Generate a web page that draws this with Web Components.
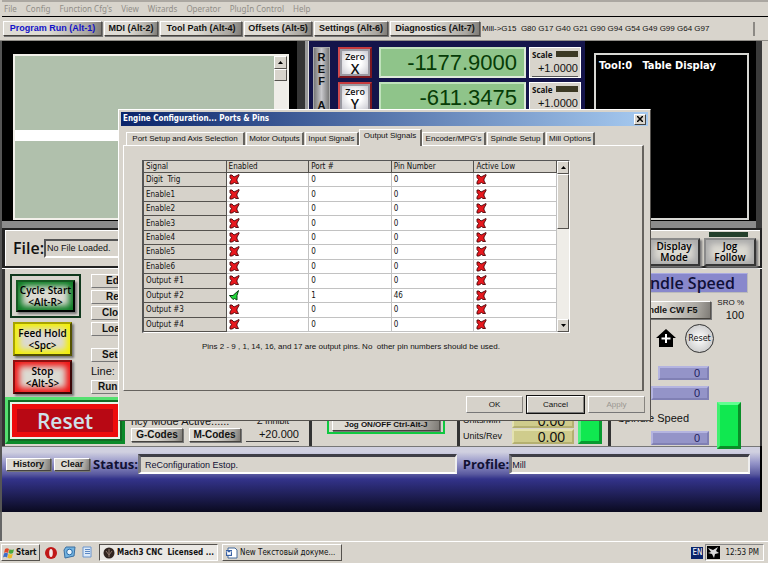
<!DOCTYPE html>
<html lang="en">
<head>
<meta charset="utf-8">
<title>Mach3 CNC</title>
<style>
html{background:#fff}
body{margin:0;color:#111;background:#fff;font:8px/12px "DejaVu Sans Condensed","DejaVu Sans",sans-serif;overflow:hidden}
</style>
</head>
<body>
<cnc-desktop></cnc-desktop>
<script>
const base = `
*{box-sizing:border-box}
button,input{font:inherit;color:inherit;margin:0;border-radius:0}
button{cursor:pointer;padding:0;white-space:nowrap}
`;
function define(name, css, html) {
  const template = document.createElement('template');
  template.innerHTML = `<style>${base}${css}</style>${typeof html === 'string' ? html : ''}`;
  customElements.define(name, class extends HTMLElement {
    connectedCallback() {
      if (this.shadowRoot) return;
      const root = this.attachShadow({mode: 'open'});
      root.append(template.content.cloneNode(true));
      if (typeof html === 'function') root.innerHTML += html(this);
    }
  });
}

/* Raised grey push button */
define('grey-button', `
:host{display:block;font:bold 9px/13px "Liberation Sans",sans-serif;color:#111}
button{display:block;width:100%;height:100%;border:1px solid;border-color:#fff #55524e #45423e #fff;text-align:var(--align,center);padding:0 0 0 var(--inset,0);
 background:linear-gradient(100deg,#dedbd4 45%,#aaa7a1 85%,#7e7b76);box-shadow:1px 1px 0 #777}
:host([plain]) button{background:#d6d2ca;border-color:#fff #87847f #777 #fff;box-shadow:none}
`, `<button type="button"><slot></slot></button>`);

/* Coloured glowing button */
define('glow-button', `
:host{display:block;--glow:#087a20;--edge:#155a22;font:600 10px/12px "Open Sans",sans-serif;color:#000}
button{display:block;width:100%;height:100%;border:2px outset var(--edge);background:#dcdad2;
 box-shadow:inset 0 0 6px 4px var(--glow),2px 2px 2px #777}
`, `<button type="button"><slot></slot></button>`);

/* Read-out value */
define('read-out', `
:host{display:block;--bg:#9494c8;--light:#b4b4e0;--dark:#8080b4}
input{display:block;width:100%;height:100%;text-align:right;border:2px solid;border-color:var(--light) var(--dark) var(--dark) var(--light);
 background:var(--bg);padding:0 7px 0 2px;outline:0;min-width:0}
`, host => `<input aria-label="${host.getAttribute('label')}" value="${host.getAttribute('value')}">`);

define('menu-bar', `
:host{display:block;background:#d8d4cc;border-top:2px solid #aba7a1;border-bottom:1px solid #000;margin-left:2px;color:#918e88;
 font:8px/14px "Noto Sans",sans-serif}
nav{display:flex;gap:9px;padding:0 2px}
button{border:0;background:none}
`, `<nav><button>File</button><button>Config</button><button>Function Cfg's</button><button>View</button><button>Wizards</button><button>Operator</button><button>PlugIn Control</button><button>Help</button></nav>`);

define('screen-tabs', `
:host{display:flex;align-items:center;gap:2px;padding:4px 13px 4px 3px;background:#d8d4cc;border-bottom:1px solid #908d88}
grey-button{height:15px;flex:none}
.a{width:99px}.b{width:54px}.c{width:82px}.d{width:68px}.e{width:74px}.f{width:90px}
.on{color:#1212c8}
output{flex:1;font:8px/14px "Liberation Sans",sans-serif;white-space:nowrap;border-right:2px solid #8c8984}
`, `<grey-button class="a on">Program Run (Alt-1)</grey-button><grey-button class="b">MDI (Alt-2)</grey-button>
<grey-button class="c">Tool Path (Alt-4)</grey-button><grey-button class="d">Offsets (Alt-5)</grey-button>
<grey-button class="e">Settings (Alt-6)</grey-button><grey-button class="f">Diagnostics (Alt-7)</grey-button>
<output>Mill-&gt;G15&nbsp; G80 G17 G40 G21 G90 G94 G54 G49 G99 G64 G97</output>`);

define('scroll-bar', `
:host{display:flex;flex-direction:column;width:13px;background:#efede8}
button{flex:none;height:13px;border:1px solid;border-color:#fff #55524e #55524e #fff;background:#d8d4cc;display:grid;place-items:center}
.thumb{height:var(--thumb,12px)}
.down{margin-top:auto}
svg{display:block;width:5px;height:3px}
`, `<button aria-label="Scroll up"><svg viewBox="0 0 5 3"><path d="M0 3 2.5 0 5 3z"/></svg></button>
<button class="thumb" aria-label="Scroll position"></button>
<button class="down" aria-label="Scroll down"><svg viewBox="0 0 5 3"><path d="M0 0 2.5 3 5 0z"/></svg></button>`);

define('program-view', `
:host{display:flex;background:#000;padding:13px 16px 8px 11px;border-right:3px solid #999;
 box-shadow:inset -10px 0 0 -2px #353535,inset 0 -7px 0 #8b8b8b}
div{flex:1;display:flex;border:2px solid #f2f0ea;background:#b0c0ac}
section{flex:1}
.row{height:11px;background:#fff;margin-top:74px}
`, `<div><section aria-label="Program"><p class="row"></p></section><scroll-bar></scroll-bar></div>`);

define('axis-row', `
:host{display:grid;grid-template-columns:34px 1fr 52px;gap:0 3px;height:31px}
.zero{border:2px solid;border-color:#c63a3e #7c1820 #7c1820 #d04a4e;padding:0;background:radial-gradient(#fff 30%,#c6c6ce 90%);
 box-shadow:inset 0 0 0 2px #9a9aa2;font:600 9px/11px "Open Sans",sans-serif;color:#111;white-space:normal}
.zero b{display:block;font:600 14px/13px "Open Sans",sans-serif}
read-out{margin-left:4px;--bg:#8fc48a;--light:#c0e2bc;--dark:#dfeadb;color:#063c06;font:22px/26px "Liberation Sans",sans-serif}
.scale{background:#d8d4cc;border:1px solid #fff;padding:0 2px;display:grid;grid-template-columns:1fr 22px;align-items:center}
.scale span{font:bold 8px/11px "Open Sans",sans-serif}
.scale i{height:6px;background:#3d3a25}
.scale input{grid-column:1/3;min-width:0;width:100%;border:0;border-bottom:1px solid #555;text-align:right;background:none;padding:0;font:11px/15px "Liberation Sans",sans-serif}
`, h => `<button class="zero">Zero<b>${h.getAttribute('axis')}</b></button>
<read-out label="${h.getAttribute('axis')} position" value="${h.getAttribute('value')}"></read-out>
<label class="scale"><span>Scale</span><i></i><input value="+1.0000"></label>`);

define('axis-panel', `
:host{display:flex;gap:8px;padding:6px 4px 8px 4px;background:#14144a;border-left:1px solid #ddd}
.ref{width:17px;background:linear-gradient(90deg,#777,#c8c8cc,#777);border:1px solid #aaa;padding:3px 0;display:grid;align-content:start;justify-items:center;
 font:bold 11px/12px "Liberation Sans",sans-serif;color:#111}
.rows{flex:1;display:grid;gap:4px;align-content:start;min-width:0}
`, `<button class="ref" aria-label="Ref all home"><span>R</span><span>E</span><span>F</span><span>&nbsp;</span><span>A</span><span>L</span><span>L</span></button>
<div class="rows"><axis-row axis="X" value="-1177.9000"></axis-row><axis-row axis="Y" value="-611.3475"></axis-row></div>`);

define('tool-view', `
:host{display:flex;background:#000;padding:12px 13px 8px 9px;box-shadow:inset -8px 0 0 -2px #3a3a3a,inset 0 -7px 0 #8b8b8b}
div{flex:1;background:#000;border:2px solid #d8d8d4;color:#fff;padding:4px 3px;font:bold 11px/14px "DejaVu Sans Condensed","DejaVu Sans",sans-serif;white-space:pre}
`, `<div>Tool:0   Table Display</div>`);

define('file-row', `
:host{display:flex;align-items:center;padding:0 4px 0 8px;background:#d8d4cc;border:solid #222;border-width:2px 2px 2px 3px;box-shadow:inset 1px 1px 0 #fff}
label{display:flex;align-items:center;flex:1;font:600 16px/24px "Open Sans",sans-serif}
input{flex:1;height:19px;font:9px/14px "Liberation Sans",sans-serif;border:2px solid;border-color:#555 #fff #fff #555;background:#d8d4cc;margin-right:12px;padding:0 1px}
.b{display:flex;gap:4px;align-items:end}
.b div{width:52px;height:36px;display:flex;flex-direction:column;justify-content:end}
.led{height:5px;margin:0 8px 1px 5px;background:#24402c}
glow-button{height:28px;--glow:#aaa;--edge:#8a8a8a;line-height:11px}
`, `<label>File:<input value="No File Loaded."></label>
<div class="b"><div><glow-button>Display<br>Mode</glow-button></div><div><i class="led"></i><glow-button>Jog<br>Follow</glow-button></div></div>`);

define('run-panel', `
:host{display:flex;flex-direction:column;background:#d8d4cc;border-left:3px solid #333;padding-bottom:2px}
.top{display:flex;gap:10px;padding:5px 4px 0 5px;height:126px}
.main{width:71px;display:grid;gap:4px;align-content:start;flex:none}
.main glow-button{height:34px;margin:0 9px 0 3px}
.frame{border:2px solid #10381c;padding:4px;height:44px}
.main .frame glow-button{margin:0;height:32px}
.yel{--glow:#f4f000;--edge:#a8a400}.red{--glow:#f01010;--edge:#8e1010}
.side{flex:1;display:grid;gap:2px;align-content:start;min-width:0}
.side grey-button{height:14px;font-size:10px;line-height:12px;--align:left;--inset:10px}
.side grey-button.far{--inset:14px}
.side grey-button.near{--inset:6px}
.side .gap{margin-top:10px}
.side label{font:11px/14px "Liberation Sans",sans-serif}
.reset{margin-top:auto;height:47px;border:3px solid;border-color:#55e070 #0b8a2a #0b8a2a #55e070;padding:4px;background:#e8f4e8;box-shadow:inset 0 0 0 2px #126a24}
.reset button{width:100%;height:100%;border:5px solid #ee0c0c;background:#b80814;color:#cfe0e8;font:600 21px/24px "Open Sans",sans-serif}
`, `<div class="top"><div class="main"><div class="frame"><glow-button>Cycle Start<br>&lt;Alt-R&gt;</glow-button></div>
<glow-button class="yel">Feed Hold<br>&lt;Spc&gt;</glow-button><glow-button class="red">Stop<br>&lt;Alt-S&gt;</glow-button></div>
<div class="side"><grey-button plain class="far">Edit</grey-button><grey-button plain class="far">Rec</grey-button><grey-button plain>Close</grey-button><grey-button plain>Load</grey-button>
<grey-button plain class="gap">Set</grey-button><label>Line:</label><grey-button plain class="near">Run</grey-button></div></div>
<div class="reset"><button>Reset</button></div>`);

define('mode-panel', `
:host{display:flex;flex-direction:column;justify-content:end;background:#d8d4cc;padding:0 10px 4px 6px;border-right:3px solid #333;font:11px/13px "Liberation Sans",sans-serif}
.row{display:flex;justify-content:space-between;align-items:center;gap:4px}
grey-button{width:52px;height:14px;font-size:10px;line-height:12px}
input{width:53px;border:0;border-bottom:1px solid #444;background:none;text-align:right;padding:0;font:11px/13px "Liberation Sans",sans-serif}
small{font:9px/13px "Liberation Sans",sans-serif;padding-right:10px}
`, `<div class="row"><span>ncy Mode Active......</span><small>Z Inhibit</small></div>
<div class="row"><grey-button>G-Codes</grey-button><grey-button>M-Codes</grey-button><input aria-label="Z Inhibit" value="+20.000"></div>`);

define('jog-panel', `
:host{display:flex;align-items:end;background:#d8d4cc;padding:0 12px 12px 15px;border-right:3px solid #333}
div{flex:1;border:2px solid #10c840;padding:2px 3px 1px}
grey-button{height:13px;font-size:8px;line-height:11px}
`, `<div><grey-button>Jog ON/OFF Ctrl-Alt-J</grey-button></div>`);

define('feed-panel', `
:host{display:flex;align-items:end;gap:4px;background:#d8d4cc;padding:0 6px 2px 3px;border-right:3px solid #333;font:9px/15px "Liberation Sans",sans-serif}
section{flex:1;display:grid;grid-template-columns:48px 1fr;gap:1px;align-items:center}
read-out{height:15px;--bg:#cfcc8c;--light:#e4e2b0;--dark:#b4b070;font:14px/12px "Liberation Sans",sans-serif}
.led{width:24px;height:60px;border:3px solid;border-color:#7affa0 #089a30 #089a30 #50f080;background:#10e850}
`, `<section><span>Units/Min</span><read-out label="Units per minute" value="0.00"></read-out><span>Units/Rev</span><read-out label="Units per rev" value="0.00"></read-out></section><i class="led"></i>`);

define('spindle-panel', `
:host{display:grid;grid-template-columns:1fr 39px;align-content:start;column-gap:2px;background:#d8d4cc;padding:4px 8px 0 3px;border-right:2px solid #333;font:11px/13px "Liberation Sans",sans-serif;min-width:0}
h2{grid-column:1/3;margin:0 4px 0 0;background:#8888cc;border:1px solid;border-color:#aaaae0 #bbb #bbb #6c6cb0;text-align:right;padding-right:12px;font:600 16px/18px "Open Sans",sans-serif;height:20px;color:#101038}
.cw{height:18px;margin-top:8px;line-height:14px;--align:right}
.sro{margin-top:3px;display:grid;justify-items:end;padding-right:8px}
.sro span{white-space:nowrap;font-size:8px}.sro b{font:11px/13px "Liberation Sans",sans-serif}
.tools{grid-column:1/3;display:flex;gap:9px;align-items:center;padding-left:42px;height:28px;margin:2px 0 14px}
svg{width:20px;height:18px}
.round{width:29px;height:29px;border-radius:50%;border:1px solid #333;background:radial-gradient(#fff,#bbb);font:9px/12px "DejaVu Sans Condensed",sans-serif;display:grid;place-items:center}
.list{display:grid;gap:6px;justify-items:end;padding-right:2px}
.list read-out{width:58px;height:14px;color:#222260}
.list read-out:first-child{width:51px}
.list p{margin:5px 20px 0 0;line-height:14px;white-space:nowrap}
.led{width:24px;height:47px;border:3px solid;border-color:#60ff90 #0a8e28 #0a8e28 #40f070;background:#10e850;align-self:end;margin:0 0 -4px 4px}
`, `<h2>Spindle Speed</h2><grey-button class="cw">Spindle CW F5&nbsp; &nbsp; &nbsp;</grey-button><div class="sro"><span>SRO %</span><b>100</b></div>
<div class="tools"><svg viewBox="0 0 20 18" aria-label="Home"><path d="M10 0 20 9H17v9H3V9H0z"/><path d="M10 5v9M5.500 9.500h9" stroke="#fff" stroke-width="2"/></svg><button class="round">Reset</button></div>
<div class="list"><read-out label="RPM" value="0"></read-out><read-out label="S-ov" value="0"></read-out><p>Spindle Speed</p><read-out label="Spindle speed" value="0"></read-out></div><i class="led"></i>`);

define('status-band', `
:host{display:flex;align-items:start;gap:3px;padding:7px 10px 0 4px;height:66px;border-top:1px solid #777;margin-right:2px;
 background:linear-gradient(#d0d0e0 5px,#9494c8 16px,#5b5ba0 27px,#33338a 32px,#0a0a20)}
grey-button{height:13px;line-height:11px;margin-top:4px;width:45px}
.clear{width:36px}
label{display:flex;align-items:center;flex:240;font:bold 13px/18px "Open Sans",sans-serif;color:#111133;min-width:0}
.s{flex:304}
.p{margin-left:3px}
input{flex:1;min-width:0;height:20px;border:solid;border-width:3px 2px 2px 3px;border-color:#3e3e46 #eee #fff #77777f;background:#d8d4cc;font:9px/14px "Liberation Sans",sans-serif;padding:0 4px}
.p input{padding:0}
`, `<grey-button>History</grey-button><grey-button class="clear">Clear</grey-button>
<label class="s">Status:<input value="ReConfiguration Estop."></label><label class="p">Profile:<input value="Mill"></label>`);

define('control-screen', `
:host{display:block;margin:0 6px 0 0;border-left:2px solid #555;background:#000}
.upper{display:grid;grid-template-columns:306px 277px 1fr;height:187px}
.lower{display:grid;grid-template:100% / 123px 187px 148px 151px 1fr;height:178px;border-top:1px solid #fff}
`, `<div class="upper"><program-view></program-view><axis-panel></axis-panel><tool-view></tool-view></div>
<file-row></file-row>
<div class="lower"><run-panel></run-panel><mode-panel></mode-panel><jog-panel></jog-panel><feed-panel></feed-panel><spindle-panel></spindle-panel></div>
<status-band></status-band>`);

/* Tick and cross used in the grid cells */
define('state-mark', `
:host{display:block;width:11px;height:11px}
svg{display:block}
`, h => h.hasAttribute('on')
 ? `<svg width="11" height="11" viewBox="0 0 11 11" aria-label="On"><path d="M.5 5.500 4 5.500 9.500.5 8 5.500V10L5.500 8.500 4 9.500z" fill="#22d83a" stroke="#063c10"/></svg>`
 : `<svg width="11" height="11" viewBox="0 0 11 11" aria-label="Off"><path d="M1 1h2l2 2 2-1 3-1.500v1L8 5v2l1.500 2.500H7L5.500 8.500 3 10H1V8l1.500-2.500L1 3.500z" fill="#e8181e" stroke="#4a0508" stroke-width=".9"/></svg>`);

define('signal-grid', `
:host{display:flex;height:173px;border:1px solid;border-color:#555 #fff #fff #555;background:#fff;border-left-width:2px;overflow:hidden}
table{flex:1;width:100%;height:171px;border-collapse:separate;border-spacing:0;table-layout:fixed;font:8px/11px "DejaVu Sans Condensed","DejaVu Sans",sans-serif;color:#111}
th,td{padding:0 2px;text-align:left;font-weight:normal;border:solid #c2c2c2;border-width:0 1px 1px 0;vertical-align:middle;white-space:nowrap}
th{background:#d6d2ca;border-color:#55524e}
scroll-bar{--thumb:55px;width:12px;flex:none}
`, () => {
  const names = ['Digit&nbsp; Trig','Enable1','Enable2','Enable3','Enable4','Enable5','Enable6','Output #1','Output #2','Output #3','Output #4'];
  const rows = names.map(n => {
    const on = n === 'Output #2';
    return `<tr><th scope="row">${n}</th><td><state-mark ${on ? 'on' : ''}></state-mark></td><td>${on ? 1 : 0}</td><td>${on ? 46 : 0}</td><td><state-mark></state-mark></td></tr>`;
  }).join('');
  return `<table><thead><tr><th>Signal</th><th>Enabled</th><th>Port #</th><th>Pin Number</th><th>Active Low</th></tr></thead><tbody>${rows}</tbody></table><scroll-bar></scroll-bar>`;
});

define('ports-dialog', `
:host{display:block;background:#d8d4cc;border:1px solid;border-color:#fff #55524e #55524e #fff;padding:2px 2px 7px;font:8px/12px "Liberation Sans",sans-serif}
header{display:flex;align-items:center;height:14px;background:linear-gradient(90deg,#0a246a,#a6caf0);color:#fff;padding:0 2px 0 2px}
h1{margin:0;flex:1;font:bold 8px/14px "DejaVu Sans Condensed","DejaVu Sans",sans-serif}
header button{width:12px;height:11px;border:1px solid;border-color:#fff #444 #444 #fff;background:#d8d4cc;color:#000;display:grid;place-items:center}
nav{display:flex;align-items:end;margin:3px 0 0 5px;height:16px;position:relative}
nav button{height:13px;border:solid;border-width:1px 2px 0 1px;border-color:#fff #66635e #fff #fff;background:none;margin-right:1px}
nav .on{height:17px;background:#d8d4cc;margin:0 0 -1px -1px;padding-bottom:4px}
.t1{width:119px}.t2{width:58px}.t3{width:54px}.t4{width:63px}.t5{width:64px}.t6{width:58px}.t7{width:49px}
main{margin:0 4px 0 2px;padding:14px 72px 0 18px;border:1px solid;border-color:#fff #66635e #66635e #fff;border-right-width:2px;height:246px}
p{margin:8px 0 0;padding-left:60px;white-space:pre}
footer{display:flex;justify-content:end;gap:4px;margin:5px 3px 0}
footer grey-button{width:57px;height:17px;font-size:8px;font-weight:normal;line-height:14px}
.def{outline:1px solid #111}
.off{color:#9a9791;text-shadow:1px 1px #fff}
`, `<header><h1>Engine Configuration... Ports &amp; Pins</h1><button aria-label="Close"><svg width="6" height="6" viewBox="0 0 6 6"><path d="M0 0 6 6M6 0 0 6" stroke="#000" stroke-width="1.500"/></svg></button></header>
<nav role="tablist"><button class="t1">Port Setup and Axis Selection</button><button class="t2">Motor Outputs</button><button class="t3">Input Signals</button><button class="on t4">Output Signals</button><button class="t5">Encoder/MPG's</button><button class="t6">Spindle Setup</button><button class="t7">Mill Options</button></nav>
<main><signal-grid></signal-grid><p>Pins 2 - 9 , 1, 14, 16, and 17 are output pins. No  other pin numbers should be used.</p></main>
<footer><grey-button plain>OK</grey-button><grey-button plain class="def">Cancel</grey-button><grey-button plain class="off">Apply</grey-button></footer>`);

define('task-bar', `
:host{display:flex;align-items:center;gap:4px;background:#d8d4cc;border-top:1px solid #fff;height:22px;padding:0 4px 0 1px;font:8px/14px "DejaVu Sans Condensed","DejaVu Sans",sans-serif}
button{height:17px;display:flex;align-items:center;gap:2px;border:1px solid;border-color:#fff #55524e #55524e #fff;background:#d8d4cc;padding:0 3px;flex:none}
.start{width:39px;font-weight:bold;padding:0 1px;gap:1px}
.q{border:0;width:14px;padding:0}
.q.first{margin-left:1px}
.on{width:119px;font-weight:bold;border-color:#55524e #fff #fff #55524e;background:#eae8e4}
.doc{width:120px}
.lang{margin-left:auto;background:#0a246a;color:#fff;padding:0 1px;line-height:12px}
.tray{display:flex;align-items:center;gap:5px;height:17px;border:1px solid;border-color:#888 #fff #fff #888;padding:0 4px 0 1px;margin-left:-2px}
svg{flex:none;display:block}
`, `<button class="start"><svg width="12" height="12" viewBox="0 0 12 12"><path d="M2 2q2-1.500 4 0L5 6Q3 4.500 1 6z" fill="#e0482c"/><path d="M6.500 2.200q2.500 1.300 4.500 0L10 6q-2 1.500-4.500 0z" fill="#4aa83c"/><path d="M1 6.500q2-1.500 4 0l-1 4q-2-1.500-4 0z" fill="#3c6cc8"/><path d="M5.400 6.800q2.500 1.300 4.400 0l-1 4q-2 1.300-4.400 0z" fill="#eebc28"/></svg>Start</button>
<button class="q first" aria-label="Opera"><svg width="12" height="12" viewBox="0 0 12 12"><circle cx="6" cy="6" r="6" fill="#c01818"/><ellipse cx="6" cy="6" rx="1.800" ry="4" fill="#f4e8e8"/></svg></button>
<button class="q" aria-label="Mail"><svg width="13" height="13" viewBox="0 0 13 13"><path d="M3 1h9l-1 9-9 2-1-8z" fill="#74b4e0" stroke="#3a6ea0"/><circle cx="6.500" cy="6" r="2.800" fill="#e8f4fc" stroke="#2468a8"/></svg></button>
<button class="q" aria-label="Notes"><svg width="12" height="13" viewBox="0 0 12 13"><path d="M2 1h8v10H2z" fill="#dceaf8" stroke="#6a94cc"/><path d="M4 3.500h5M4 5.500h5M4 7.500h5" stroke="#5c88c4"/></svg></button>
<button class="on"><svg width="12" height="12" viewBox="0 0 12 12"><circle cx="6" cy="6" r="5.500" fill="#30241f"/><path d="M3 4l3 4 3-4M6 2v8" stroke="#8c7468" fill="none"/></svg><span>Mach3 CNC&nbsp; Licensed ...</span></button>
<button class="doc"><svg width="12" height="12" viewBox="0 0 12 12"><path d="M2 1h7l2 2v8H2z" fill="#fff" stroke="#446a9c"/><path d="M0 3h6v6H0z" fill="#3860a4"/><path d="M1 4l1 4 1-3 1 3 1-4" stroke="#fff" fill="none"/></svg><span>New Текстовый докуме...</span></button>
<span class="lang">EN</span><span class="tray"><svg width="13" height="13" viewBox="0 0 13 13"><path d="M0 0h13v13H0z"/><path d="M1 2l5 2 5-3-2 4 3 2-4 1-1 4-2-4-4-1 3-1z" fill="#d8d8d8"/></svg>12:53 PM</span>`);

define('cnc-desktop', `
:host{display:block;position:relative;background:#d8d4cc}
.rest{height:29px;border-left:2px solid #666}
ports-dialog{position:absolute;left:118px;top:109px;width:533px}
`, `<menu-bar></menu-bar><screen-tabs></screen-tabs><control-screen></control-screen><div class="rest"></div><task-bar></task-bar><ports-dialog></ports-dialog>`);
</script>
</body>
</html>
